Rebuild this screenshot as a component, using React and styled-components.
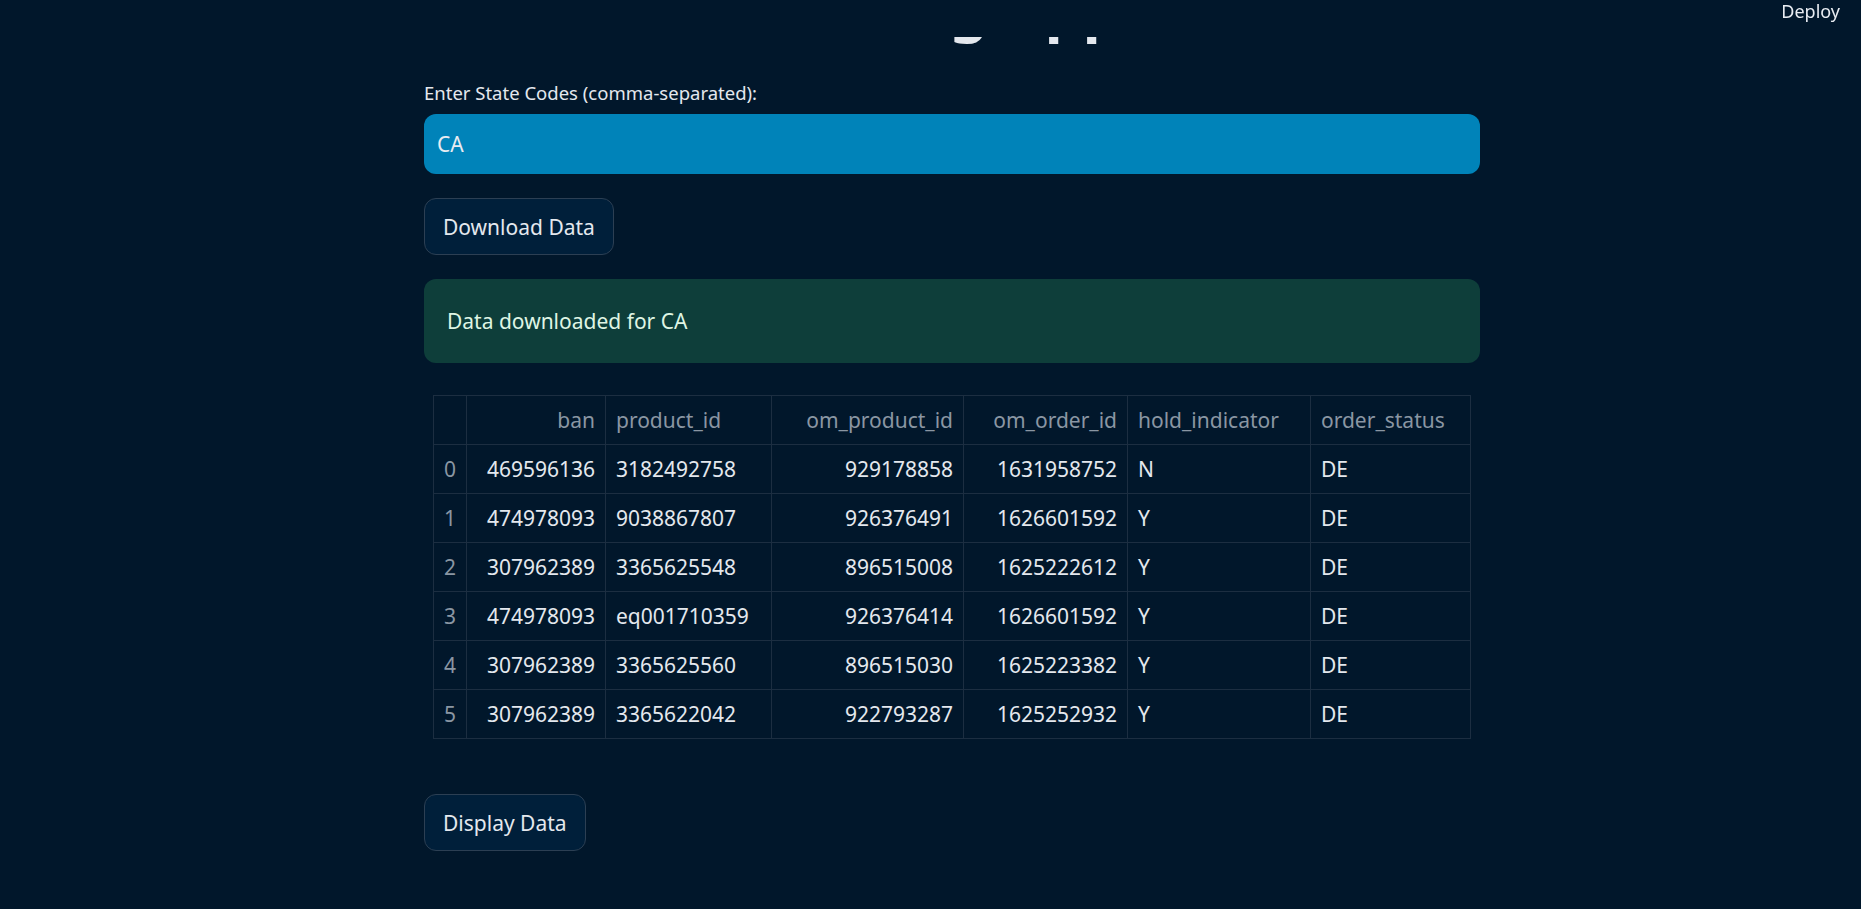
import styled, { createGlobalStyle } from "styled-components";

const GlobalStyle = createGlobalStyle`
  html, body {
    margin: 0;
    padding: 0;
    background: #01172b;
  }
  body {
    font-family: "Noto Sans", "Open Sans", sans-serif;
    color: #e4e8ee;
    overflow: hidden;
  }
  * { box-sizing: border-box; }
`;

const rows = [
  ["0", "469596136", "3182492758", "929178858", "1631958752", "N", "DE"],
  ["1", "474978093", "9038867807", "926376491", "1626601592", "Y", "DE"],
  ["2", "307962389", "3365625548", "896515008", "1625222612", "Y", "DE"],
  ["3", "474978093", "eq001710359", "926376414", "1626601592", "Y", "DE"],
  ["4", "307962389", "3365625560", "896515030", "1625223382", "Y", "DE"],
  ["5", "307962389", "3365622042", "922793287", "1625252932", "Y", "DE"],
];

const columns = [
  { name: "", width: 33, align: "left" },
  { name: "ban", width: 139, align: "right" },
  { name: "product_id", width: 166, align: "left" },
  { name: "om_product_id", width: 192, align: "right" },
  { name: "om_order_id", width: 164, align: "right" },
  { name: "hold_indicator", width: 183, align: "left" },
  { name: "order_status", width: 160, align: "left" },
];

export default function App() {
  return (
    <Page>
      <GlobalStyle />
      <Header>
        <DeployLink>Deploy</DeployLink>
      </Header>

      <Main>
        <Title>Billing App</Title>

        <Label>Enter State Codes (comma-separated):</Label>
        <Input defaultValue="CA" />

        <Button $mt={24}>Download Data</Button>

        <Alert>Data downloaded for CA</Alert>

        <Table>
          <colgroup>
            {columns.map((c, i) => (
              <col key={i} style={{ width: c.width }} />
            ))}
          </colgroup>
          <thead>
            <tr>
              {columns.map((c, i) => (
                <Th key={i} $align={c.align}>
                  {c.name}
                </Th>
              ))}
            </tr>
          </thead>
          <tbody>
            {rows.map((r) => (
              <tr key={r[0]}>
                {r.map((v, i) => (
                  <Td key={i} $align={columns[i].align} $index={i === 0}>
                    {v}
                  </Td>
                ))}
              </tr>
            ))}
          </tbody>
        </Table>

        <Button $mt={55}>Display Data</Button>
      </Main>
    </Page>
  );
}

const Page = styled.div`
  width: 100%;
  height: 909px;
  background: #01172b;
  overflow: hidden;
`;

const Header = styled.header`
  position: fixed;
  top: 0;
  right: 0;
  left: 0;
  height: 37px;
  background: #01172b;
  display: flex;
  justify-content: flex-end;
  align-items: flex-start;
  padding-right: 21px;
  z-index: 2;
`;

const DeployLink = styled.span`
  font-size: 18px;
  line-height: 18px;
  margin-top: 2px;
  color: #e8ecf2;
`;

const Main = styled.main`
  position: relative;
  z-index: 1;
  width: 1056px;
  margin-left: 424px;
  display: flex;
  flex-direction: column;
  align-items: flex-start;
`;

const Title = styled.h1`
  align-self: stretch;
  text-align: center;
  margin: -35px 0 0 0;
  padding-left: 16px;
  font-size: 60px;
  line-height: 84px;
  height: 84px;
  font-weight: 700;
  color: #e4e8ee;
`;

const Label = styled.label`
  font-size: 18.5px;
  line-height: 28px;
  margin-top: 30px;
  color: #e4e8ee;
`;

const Input = styled.input`
  margin-top: 7px;
  width: 100%;
  height: 60px;
  border: none;
  border-radius: 12px;
  background: #0083b9;
  color: #e8ecf2;
  font-family: inherit;
  font-size: 21px;
  padding: 0 13px;
  outline: none;
`;

const Button = styled.button`
  margin-top: ${(p) => p.$mt}px;
  height: 57px;
  padding: 0 18px;
  border-radius: 12px;
  border: 1px solid #2c3f53;
  background: #001f3a;
  color: #e4e8ee;
  font-family: inherit;
  font-size: 21px;
  cursor: pointer;
`;

const Alert = styled.div`
  margin-top: 24px;
  width: 100%;
  height: 84px;
  border-radius: 12px;
  background: #0e3e3a;
  color: #dff5e4;
  font-size: 21px;
  display: flex;
  align-items: center;
  padding: 0 23px;
`;

const Table = styled.table`
  margin: 32px 0 0 9px;
  width: 1037px;
  border-collapse: collapse;
  table-layout: fixed;
  font-size: 21px;
`;

const Th = styled.th`
  height: 49px;
  padding: 0 10px;
  font-weight: 400;
  text-align: ${(p) => p.$align};
  color: #8a96a3;
  border: 1px solid #1c2e41;
  white-space: nowrap;
`;

const Td = styled.td`
  height: 49px;
  padding: 0 10px;
  text-align: ${(p) => p.$align};
  color: ${(p) => (p.$index ? "#8a96a3" : "#e4e8ee")};
  border: 1px solid #1c2e41;
  white-space: nowrap;
`;
